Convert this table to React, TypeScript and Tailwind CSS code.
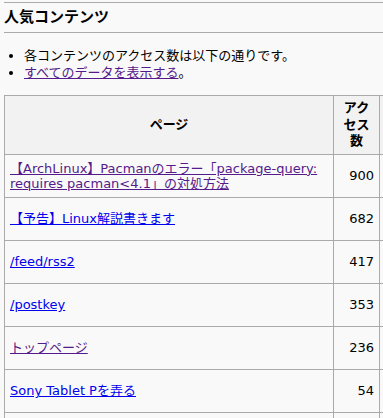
import React from "react";

const rows: { title: React.ReactNode; count: number; visited: boolean }[] = [
  {
    title: (
      <>
        【ArchLinux】Pacmanのエラー「package-query:
        <br />
        requires pacman&lt;4.1」の対処方法
      </>
    ),
    count: 900,
    visited: true,
  },
  { title: "【予告】Linux解説書きます", count: 682, visited: false },
  { title: "/feed/rss2", count: 417, visited: false },
  { title: "/postkey", count: 353, visited: false },
  { title: "トップページ", count: 236, visited: true },
  { title: "Sony Tablet Pを弄る", count: 54, visited: false },
  { title: "", count: 0, visited: false },
];

export default function App() {
  return (
    <div
      className="w-[383px] h-[418px] overflow-hidden bg-[#f9f9f9] text-[13px] text-black"
      style={{ fontFamily: '"DejaVu Sans", "Noto Sans CJK JP", sans-serif' }}
    >
      <div className="pl-1 pt-[2px]">
        <div className="border-t border-[#aaaaaa]" />
        <h2 className="text-[15px] font-bold leading-[29px] border-b border-[#aaaaaa]">
          人気コンテンツ
        </h2>
        <ul className="mt-[14px] list-disc pl-[20px] leading-[17px]">
          <li>各コンテンツのアクセス数は以下の通りです。</li>
          <li>
            <a href="#" className="underline text-[#551a8b]">
              すべてのデータを表示する
            </a>
            。
          </li>
        </ul>
        <table className="mt-[14px] border-collapse table-fixed w-[440px]">
          <colgroup>
            <col className="w-[329px]" />
            <col className="w-[46px]" />
            <col className="w-[65px]" />
          </colgroup>
          <thead>
            <tr className="bg-[#f2f2f2]">
              <th className="border border-[#aaaaaa] h-[59px] font-bold text-center leading-[16.5px] px-[5px]">
                ページ
              </th>
              <th className="border border-[#aaaaaa] h-[59px] font-bold text-center leading-[16.5px] px-[5px]">
                アクセス数
              </th>
              <th className="border border-[#aaaaaa] h-[59px] font-bold text-center leading-[16.5px] px-[5px]">
                
              </th>
            </tr>
          </thead>
          <tbody>
            {rows.map((r, i) => (
              <tr key={i}>
                <td className="border border-[#aaaaaa] h-[43px] px-[5px] align-middle leading-[15.5px]">
                  <a
                    href="#"
                    className={
                      r.visited
                        ? "underline text-[#551a8b]"
                        : "underline text-[#0000ee]"
                    }
                  >
                    {r.title}
                  </a>
                </td>
                <td className="border border-[#aaaaaa] h-[43px] px-[5px] text-right align-middle">
                  {r.count ? r.count : ""}
                </td>
                <td className="border border-[#aaaaaa] h-[43px] px-[5px]" />
              </tr>
            ))}
          </tbody>
        </table>
      </div>
    </div>
  );
}
